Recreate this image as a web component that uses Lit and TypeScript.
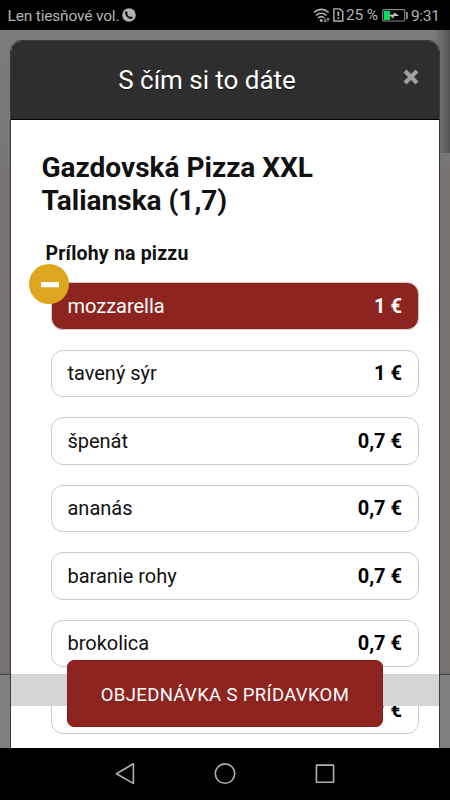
import { LitElement, html, css, svg } from "lit";
import { customElement } from "lit/decorators.js";

@customElement("status-bar")
class StatusBar extends LitElement {
  static styles = css`
    :host {
      display: flex;
      align-items: center;
      height: 30px;
      flex: none;
      padding: 0 11px 0 7.5px;
      box-sizing: border-box;
      background: #000;
      color: #b3b3b3;
      font: 15.5px/30px Roboto, sans-serif;
      white-space: nowrap;
    }
    svg { display: block; flex: none; }
    .carrier { width: 111.5px; letter-spacing: -0.18px; padding-top: 1px; }
    .phone { margin-left: 3px; }
    .space { flex: 1; }
    .sim { margin-left: 2px; }
    .percent { margin-left: 2px; width: 33px; letter-spacing: -0.15px; }
    .battery { margin-left: 3px; }
    .clock { width: 28px; margin-left: 3px; letter-spacing: -0.35px; padding-top: 1px; }
  `;

  render() {
    return html`
      <span class="carrier">Len tiesňové vol.</span>
      <svg class="phone" width="14" height="14" viewBox="0 0 14 14">
        <circle cx="7" cy="7" r="6.8" fill="#b3b3b3" />
        <path d="M4.5 3.1 5.8 5.2 5.1 6.1Q6 8 7.8 8.9L8.8 8.2 11 9.5Q10.5 11.3 8.7 11 3.9 9.8 3 5.3 2.8 3.4 4.5 3.1Z" fill="#111" />
      </svg>
      <span class="space"></span>
      <svg class="wifi" width="18" height="15" viewBox="0 0 18 15" fill="none" stroke="#b3b3b3" stroke-width="1.6">
        <path d="M.8 4.5Q8.2-1.6 15.8 4.5M3 7.5Q8.2 3 13.4 7.5M5.1 10.2Q8.2 7.3 11.2 10" />
        <circle cx="8.2" cy="12.4" r="1.5" fill="#b3b3b3" stroke="none" />
        <path d="M12.1 10v4M10.8 12l1.3 2 1.2-2M15 14v-4M13.8 12l1.2-2 1.3 2" stroke-width=".8" />
      </svg>
      <svg class="sim" width="11" height="14" viewBox="0 0 11 14" fill="none" stroke="#b3b3b3" stroke-width="1.4">
        <path d="M.9.9h5.8l3.1 2.8v9.3H.9z" />
        <path d="M5.3 3.4v4.7M5.3 9.2v1.8" stroke-width="1.7" />
      </svg>
      <span class="percent">25 %</span>
      <svg class="battery" width="26" height="13" viewBox="0 0 26 13" fill="none">
        <rect x=".7" y=".7" width="22" height="11.3" rx="1" stroke="#858585" stroke-width="1.2" />
        <rect x="2" y="2" width="6" height="9" fill="#00e060" />
        <path d="M6.7 6.1 12 5.3 11.8 3.2 17.2 6.7 11.6 7.3 11.9 9.8Z" fill="#c5c5c5" />
        <path d="M25 3v7" stroke="#b3b3b3" stroke-width="1.4" />
      </svg>
      <span class="clock">9:31</span>
    `;
  }
}

@customElement("topping-row")
class ToppingRow extends LitElement {
  static properties = {
    name: {},
    price: {},
    selected: { type: Boolean, reflect: true },
  };
  declare name: string;
  declare price: string;
  declare selected: boolean;

  static styles = css`
    :host {
      display: flex;
      position: relative;
      justify-content: space-between;
      align-items: center;
      box-sizing: border-box;
      height: 47.2px;
      padding: 0 16px 0.8px 15.5px;
      border: 1px solid #ccc;
      border-radius: 12px;
      background: #fff;
      color: #111;
      font: 20px/30px Roboto, sans-serif;
      letter-spacing: -0.02px;
    }
    :host([selected]) { background: #8e241f; color: #fff; }
    .price { font-weight: 700; color: #000; letter-spacing: 0; }
    :host([selected]) .price { color: #fff; }
    .remove { position: absolute; left: -23px; top: -19.5px; display: block; }
  `;

  render() {
    return html`
      <span class="name">${this.name}</span>
      <span class="price">${this.price}</span>
      ${this.selected
        ? html`<svg class="remove" width="40" height="40" viewBox="0 0 40 40">
            <circle cx="20" cy="20" r="20" fill="#dea51e" />
            <rect x="12" y="18" width="18" height="5.3" fill="#fff" />
          </svg>`
        : null}
    `;
  }
}

@customElement("nav-bar")
class NavBar extends LitElement {
  static styles = css`
    :host {
      display: flex;
      flex: none;
      height: 52px;
      box-sizing: border-box;
      padding-bottom: 2px;
      justify-content: center;
      align-items: center;
      gap: 78px;
      background: #000;
    }
    svg { display: block; }
  `;

  render() {
    const shapes = [
      svg`<path d="M19.4 1.8v19.6L2.4 11.7Z" stroke-linejoin="round" />`,
      svg`<circle cx="11" cy="11.6" r="9.7" />`,
      svg`<rect x="2.4" y="3.1" width="17.2" height="17.2" rx=".5" />`,
    ];
    return shapes.map(
      (s) => html`<svg width="22" height="23" viewBox="0 0 22 23" fill="none" stroke="#b0b0b0" stroke-width="1.6">${s}</svg>`
    );
  }
}

const toppings = [
  { name: "mozzarella", price: "1 €", selected: true },
  { name: "tavený sýr", price: "1 €", selected: false },
  { name: "špenát", price: "0,7 €", selected: false },
  { name: "ananás", price: "0,7 €", selected: false },
  { name: "baranie rohy", price: "0,7 €", selected: false },
  { name: "brokolica", price: "0,7 €", selected: false },
  { name: "", price: "0,7 €", selected: false },
];

@customElement("app-root")
class AppRoot extends LitElement {
  static styles = css`
    :host {
      display: flex;
      flex-direction: column;
      width: 450px;
      height: 800px;
      overflow: hidden;
      font-family: Roboto, sans-serif;
    }
    .screen {
      position: relative;
      height: 718px;
      box-sizing: border-box;
      padding: 10px 10px 0 10px;
      overflow: hidden;
      background:
        linear-gradient(90deg, #777 0, #555 100%) right top / 14px 123px no-repeat,
        linear-gradient(#7b7b7b, #777) 0 0 / 100% 123px no-repeat,
        linear-gradient(#777, #787371) 0 123px / 100% 20px no-repeat,
        linear-gradient(#787371, #333) 0 643px / 100% 2px no-repeat,
        linear-gradient(#808080, #808080) 0 645px / 100% 73px no-repeat,
        #787371;
    }
    .dialog {
      height: 720px;
      box-sizing: border-box;
      border: 1px solid #3a3a3a;
      border-radius: 11px 11px 0 0;
      background: #fff;
      overflow: hidden;
    }
    .header {
      display: grid;
      grid-template-columns: 54px 1fr 54px;
      align-items: center;
      height: 79px;
      box-sizing: border-box;
      border-bottom: 1px solid #000;
      background: #2e2e2e;
      color: #fff;
    }
    .title {
      grid-column: 2;
      margin-left: -36px;
      text-align: center;
      font-size: 26px;
      line-height: 40px;
      letter-spacing: -0.03px;
      text-shadow: 0 1px 0 #111;
      white-space: nowrap;
    }
    .close { display: block; margin: -7px 0 0 17px; }
    .content { padding: 31px 20px 0 30.5px; }
    .product {
      margin: 0;
      font-size: 28px;
      line-height: 33px;
      font-weight: 700;
      letter-spacing: 0;
      color: #111;
    }
    .group {
      margin: 20.5px 0 0 4px;
      font-size: 19.5px;
      line-height: 31px;
      font-weight: 700;
      letter-spacing: 0.2px;
      color: #111;
    }
    .list { display: grid; row-gap: 20.3px; margin: 13.9px 0 0 9.5px; }
    .band {
      position: absolute;
      left: 11px;
      right: 11px;
      bottom: 42px;
      height: 32px;
      background: #d4d4d4;
    }
    .order {
      position: absolute;
      left: 67px;
      top: 630px;
      width: 316px;
      height: 67px;
      padding: 2px 0 0;
      box-sizing: border-box;
      border: 1px solid #891a16;
      border-radius: 7px;
      background: #8e241f;
      color: #fff;
      font: 18.5px/28px Roboto, sans-serif;
      letter-spacing: 0.35px;
      white-space: nowrap;
    }
  `;

  render() {
    return html`
      <status-bar></status-bar>
      <div class="screen">
        <section class="dialog">
          <header class="header">
            <span class="title">S čím si to dáte</span>
            <svg class="close" width="18" height="16" viewBox="0 0 18 16">
              <path d="M3 2 15 14M15 2 3 14" stroke="#a0a0a0" stroke-width="4.2" />
            </svg>
          </header>
          <div class="content">
            <h1 class="product">Gazdovská Pizza XXL<br />Talianska (1,7)</h1>
            <h2 class="group">Prílohy na pizzu</h2>
            <div class="list">
              ${toppings.map(
                (t) => html`<topping-row .name=${t.name} .price=${t.price} .selected=${t.selected}></topping-row>`
              )}
            </div>
          </div>
        </section>
        <div class="band"></div>
        <button class="order">OBJEDNÁVKA S PRÍDAVKOM</button>
      </div>
      <nav-bar></nav-bar>
    `;
  }
}
